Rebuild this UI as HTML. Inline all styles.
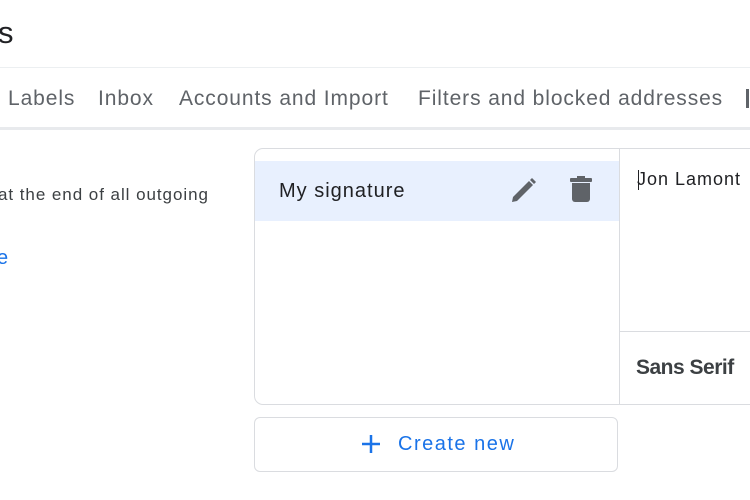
<!DOCTYPE html>
<html><head><style>
body{margin:0;width:750px;height:500px;overflow:hidden;background:#fff;font-family:"Liberation Sans",Arial,sans-serif;position:relative}
.a{position:absolute;white-space:nowrap}
.t{top:87px;font-size:21px;color:#5f6368;letter-spacing:0.9px}
</style></head><body>
<div class="a" style="left:-2px;top:15px;font-size:31px;color:#202124">s</div>
<div class="a" style="left:0;top:67px;width:750px;height:1px;background:#eceff1"></div>
<div class="a" style="left:0;top:127px;width:750px;height:3px;background:#e8eaed"></div>
<div class="a t" style="left:8px">Labels</div>
<div class="a t" style="left:98px">Inbox</div>
<div class="a t" style="left:179px">Accounts and Import</div>
<div class="a t" style="left:418px">Filters and blocked addresses</div>
<div class="a" style="top:89px;left:746px;width:3px;height:19px;background:#5f6368"></div>
<div class="a" style="left:-4px;top:150px;font-size:20px;color:#202124">:</div>
<div class="a" style="left:-2px;top:185px;font-size:17px;color:#3c4043;letter-spacing:0.95px">at the end of all outgoing</div>
<div class="a" style="left:-3px;top:247px;font-size:20px;color:#1a73e8">e</div>
<div class="a" style="left:254px;top:148px;width:520px;height:255px;border:1px solid #dadce0;border-radius:9px"></div>
<div class="a" style="left:255px;top:161px;width:364px;height:60px;background:#e8f0fe"></div>
<div class="a" style="left:619px;top:149px;width:1px;height:255px;background:#dadce0"></div>
<div class="a" style="left:620px;top:331px;width:130px;height:1px;background:#dadce0"></div>
<div class="a" style="left:279px;top:180px;font-size:20px;color:#202124;letter-spacing:1px">My signature</div>
<svg class="a" style="left:508px;top:176px" width="30" height="30" viewBox="0 0 30 30"><path d="M4 26l1-5 16-16 4 4-16 16z" fill="#5f6368"/><path d="M22 4l2-2 4 4-2 2z" fill="#5f6368"/></svg>
<svg class="a" style="left:568px;top:176px" width="26" height="28" viewBox="0 0 26 28"><rect x="2" y="2" width="22" height="4" rx="1" fill="#5f6368"/><rect x="9" y="0" width="8" height="3" fill="#5f6368"/><path d="M4 7h18v16a3 3 0 0 1-3 3H7a3 3 0 0 1-3-3z" fill="#5f6368"/></svg>
<div class="a" style="left:637px;top:169px;font-size:18px;color:#202124;letter-spacing:1px">Jon Lamont</div>
<div class="a" style="left:638px;top:170px;width:1px;height:20px;background:#202124"></div>
<div class="a" style="left:636px;top:356px;font-size:21px;color:#3c4043;font-weight:bold;letter-spacing:-0.5px">Sans Serif</div>
<div class="a" style="left:254px;top:417px;width:362px;height:53px;border:1px solid #dadce0;border-radius:6px"></div>
<svg class="a" style="left:360px;top:433px" width="22" height="22" viewBox="0 0 22 22"><path d="M11 2v18M2 11h18" stroke="#1a73e8" stroke-width="2.5"/></svg>
<div class="a" style="left:398px;top:433px;font-size:20px;color:#1a73e8;letter-spacing:1.5px">Create new</div>
</body></html>
